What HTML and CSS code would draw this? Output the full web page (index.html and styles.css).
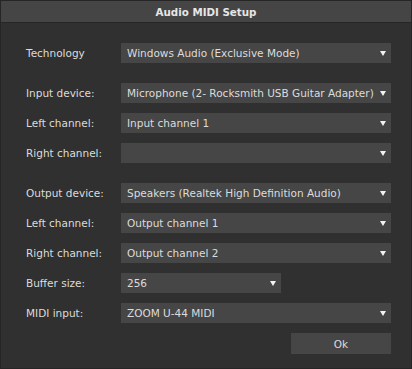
FILE: index.html
```html
<!DOCTYPE html>
<html>
<head>
<meta charset="utf-8">
<link rel="stylesheet" href="styles.css">
</head>
<body>
<div class="window">
  <div class="titlebar">Audio MIDI Setup</div>
  <div class="form">
    <div class="row"><span class="label">Technology</span><div class="select">Windows Audio (Exclusive Mode)<span class="arrow"></span></div></div>
    <div class="row group"><span class="label">Input device:</span><div class="select">Microphone (2- Rocksmith USB Guitar Adapter)<span class="arrow"></span></div></div>
    <div class="row"><span class="label">Left channel:</span><div class="select">Input channel 1<span class="arrow"></span></div></div>
    <div class="row"><span class="label">Right channel:</span><div class="select"><span class="arrow"></span></div></div>
    <div class="row group"><span class="label">Output device:</span><div class="select">Speakers (Realtek High Definition Audio)<span class="arrow"></span></div></div>
    <div class="row"><span class="label">Left channel:</span><div class="select">Output channel 1<span class="arrow"></span></div></div>
    <div class="row"><span class="label">Right channel:</span><div class="select">Output channel 2<span class="arrow"></span></div></div>
    <div class="row"><span class="label">Buffer size:</span><div class="select short">256<span class="arrow"></span></div></div>
    <div class="row"><span class="label">MIDI input:</span><div class="select">ZOOM U-44 MIDI<span class="arrow"></span></div></div>
    <div class="row buttons"><button class="ok">Ok</button></div>
  </div>
</div>
</body>
</html>
```

FILE: styles.css
```css
html, body {
  margin: 0;
  padding: 0;
  background: #2f2f2f;
}
.window {
  width: 412px;
  height: 369px;
  box-sizing: border-box;
  background: #303030;
  border: 1px solid #262626;
  font-family: "DejaVu Sans", sans-serif;
  font-size: 10.5px;
  color: #dcdcdc;
}
.titlebar {
  height: 21px;
  background: #454545;
  border-bottom: 1px solid #262626;
  display: flex;
  align-items: center;
  justify-content: center;
  font-weight: bold;
  font-size: 10.3px;
  color: #e6e6e6;
}
.form {
  display: flex;
  flex-direction: column;
  gap: 10px;
  padding: 20px 0 0 25px;
}
.row {
  display: flex;
  align-items: center;
  height: 20px;
}
.row.group {
  margin-top: 10px;
}
.label {
  width: 95px;
  flex: none;
}
.select {
  position: relative;
  width: 270px;
  height: 20px;
  box-sizing: border-box;
  background: #464646;
  padding-left: 6px;
  display: flex;
  align-items: center;
  white-space: nowrap;
}
.select.short {
  width: 160px;
}
.arrow {
  position: absolute;
  right: 5px;
  top: 8px;
  width: 0;
  height: 0;
  border-left: 3.5px solid transparent;
  border-right: 3.5px solid transparent;
  border-top: 5px solid #f2f2f2;
}
.buttons {
  justify-content: flex-end;
  padding-right: 20px;
  height: 21px;
}
.ok {
  width: 100px;
  height: 21px;
  background: #464646;
  border: none;
  color: #dcdcdc;
  font-family: "DejaVu Sans", sans-serif;
  font-size: 10.5px;
  padding: 0;
}
```
